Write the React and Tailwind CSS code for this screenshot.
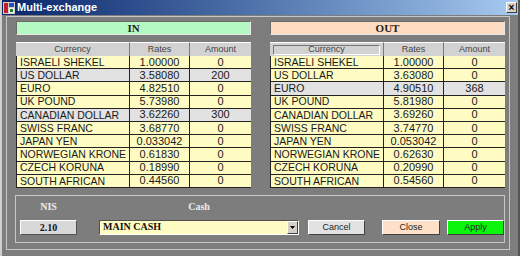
import React from "react";

const rowsIn = [
  ["ISRAELI SHEKEL", "1.00000", "0"],
  ["US DOLLAR", "3.58080", "200", true],
  ["EURO", "4.82510", "0"],
  ["UK POUND", "5.73980", "0"],
  ["CANADIAN DOLLAR", "3.62260", "300", true],
  ["SWISS FRANC", "3.68770", "0"],
  ["JAPAN YEN", "0.033042", "0"],
  ["NORWEGIAN KRONE", "0.61830", "0"],
  ["CZECH KORUNA", "0.18990", "0"],
  ["SOUTH AFRICAN", "0.44560", "0"],
];

const rowsOut = [
  ["ISRAELI SHEKEL", "1.00000", "0"],
  ["US DOLLAR", "3.63080", "0"],
  ["EURO", "4.90510", "368", true],
  ["UK POUND", "5.81980", "0"],
  ["CANADIAN DOLLAR", "3.69260", "0"],
  ["SWISS FRANC", "3.74770", "0"],
  ["JAPAN YEN", "0.053042", "0"],
  ["NORWEGIAN KRONE", "0.62630", "0"],
  ["CZECH KORUNA", "0.20990", "0"],
  ["SOUTH AFRICAN", "0.54560", "0"],
];

const sans = { fontFamily: '"Liberation Sans", Arial, sans-serif' };
const serif = { fontFamily: '"Liberation Serif", "Times New Roman", serif' };

const RateTable = ({ title, titleBg, rows, focused }) => {
  return (
    <div className="w-[235px] flex flex-col">
      {/* titre IN / OUT */}
      <div
        className={`h-[14px] flex items-center justify-center border border-t-[#6a6a6a] border-l-[#6a6a6a] border-b-[#e8e8e8] border-r-[#e8e8e8] text-[11px] font-bold text-[#222] ${titleBg}`}
        style={serif}
      >
        {title}
      </div>

      {/* en-tête des colonnes */}
      <div
        className="mt-[7px] h-[14px] grid grid-cols-[114px_60px_61px] bg-[#d2d2d2] text-[9px] text-[#444] leading-none"
        style={sans}
      >
        <div className="flex items-center justify-center border-r border-[#7a7a7a] border-t border-t-white px-[3px]">
          <div
            className={`w-full h-[10px] flex items-center justify-center ${
              focused ? "border border-t-[#777] border-l-[#777] border-b-white border-r-white" : ""
            }`}
          >
            Currency
          </div>
        </div>
        <div className="flex items-center justify-center border-r border-[#7a7a7a] border-t border-t-white">
          Rates
        </div>
        <div className="flex items-center justify-center border-t border-t-white">Amount</div>
      </div>

      {/* lignes */}
      <div className="flex flex-col border-l border-[#222]">
        {rows.map(([name, rate, amount, sel]) => (
          <div
            key={name}
            className={`h-[13.2px] grid grid-cols-[113px_60px_61px] text-[11px] leading-none text-[#1a1a1a] ${
              sel ? "bg-[#e2e2e2]" : "bg-[#fefcc2]"
            }`}
            style={sans}
          >
            <div className="flex items-center pl-[3px] border-r border-b border-[#222] whitespace-nowrap text-[10.5px]">
              {name}
            </div>
            <div className="flex items-center justify-center border-r border-b border-[#222]">{rate}</div>
            <div className="flex items-center justify-center border-b border-[#222]">{amount}</div>
          </div>
        ))}
      </div>
    </div>
  );
};

const Button = ({ label, bg }) => (
  <button
    className={`h-[15px] flex items-center justify-center border border-t-white border-l-white border-b-[#404040] border-r-[#404040] text-[9px] text-[#222] leading-none ${bg}`}
    style={sans}
  >
    {label}
  </button>
);

export default function App() {
  return (
    <div className="w-[520px] h-[256px] bg-[#7d7d7d] flex flex-col border-l-2 border-l-[#cfcfcf] border-r-2 border-r-[#555]">
      {/* barre de titre */}
      <div className="h-[15px] flex items-center bg-gradient-to-r from-[#0a246a] to-[#a6caf0] pl-[1px] pr-[1px]">
        <svg width="12" height="12" viewBox="0 0 12 12" className="shrink-0">
          <rect x="0" y="0" width="12" height="12" fill="#d4d0c8" />
          <rect x="1" y="1" width="4" height="10" fill="#c02020" />
          <rect x="6" y="1" width="5" height="4" fill="#2050c0" />
          <rect x="6" y="6" width="5" height="5" fill="#f0f0f0" />
          <rect x="7" y="7" width="3" height="3" fill="#208040" />
        </svg>
        <span className="ml-[2px] text-[11px] font-bold text-white leading-none" style={sans}>
          Multi-exchange
        </span>
        <div className="ml-auto w-[11px] h-[11px] bg-[#d4d0c8] border border-t-white border-l-white border-b-[#404040] border-r-[#404040] flex items-center justify-center text-[10px] font-bold leading-none text-black" style={sans}>
          ×
        </div>
      </div>

      {/* corps */}
      <div className="flex-1 pt-[1px] pl-[4px] pr-[8px] pb-[6px] flex">
        <div className="flex-1 border border-[#c8c8c8] pt-[4px] pl-[9px] pr-[3px] flex flex-col">
          <div className="flex gap-[19px]">
            <RateTable title="IN" titleBg="bg-[#b4f8c4]" rows={rowsIn} />
            <RateTable title="OUT" titleBg="bg-[#fedcc2]" rows={rowsOut} focused />
          </div>

          {/* zone du bas */}
          <div className="mt-[7px] -ml-[1px] w-[490px] h-[48px] border border-[#c8c8c8] flex items-end pl-[4px] pb-[7px]">
            <div className="flex flex-col items-center w-[57px]">
              <div className="h-[12px] mb-[7px] text-[10px] font-bold text-[#ececec] leading-none flex items-center" style={serif}>
                NIS
              </div>
              <div
                className="w-[57px] h-[15px] bg-[#d8d8d8] border border-t-white border-l-white border-b-[#505050] border-r-[#505050] flex items-center justify-center text-[10px] font-bold text-[#111]"
                style={serif}
              >
                2.10
              </div>
            </div>
            <div className="ml-[22px] flex flex-col items-center w-[200px]">
              <div className="h-[12px] mb-[7px] text-[10px] font-bold text-[#ececec] leading-none flex items-center" style={serif}>
                Cash
              </div>
              <div className="w-[200px] h-[15px] bg-[#fefcc2] border border-t-[#505050] border-l-[#505050] border-b-white border-r-white flex items-center">
                <span className="pl-[3px] text-[10px] font-bold text-[#111] leading-none" style={serif}>
                  MAIN CASH
                </span>
                <div className="ml-auto w-[11px] h-[13px] bg-[#d4d0c8] border border-t-white border-l-white border-b-[#404040] border-r-[#404040] flex items-center justify-center">
                  <svg width="5" height="3" viewBox="0 0 5 3">
                    <path d="M0 0h5L2.5 3z" fill="#000" />
                  </svg>
                </div>
              </div>
            </div>
            <div className="ml-[9px] w-[57px]">
              <Button label="Cancel" bg="bg-[#e2e2e2] w-full" />
            </div>
            <div className="ml-[17px] w-[58px]">
              <Button label="Close" bg="bg-[#fee0c8] w-full" />
            </div>
            <div className="ml-[7px] w-[57px]">
              <Button label="Apply" bg="bg-[#0cf40c] w-full" />
            </div>
          </div>
        </div>
      </div>
    </div>
  );
}
